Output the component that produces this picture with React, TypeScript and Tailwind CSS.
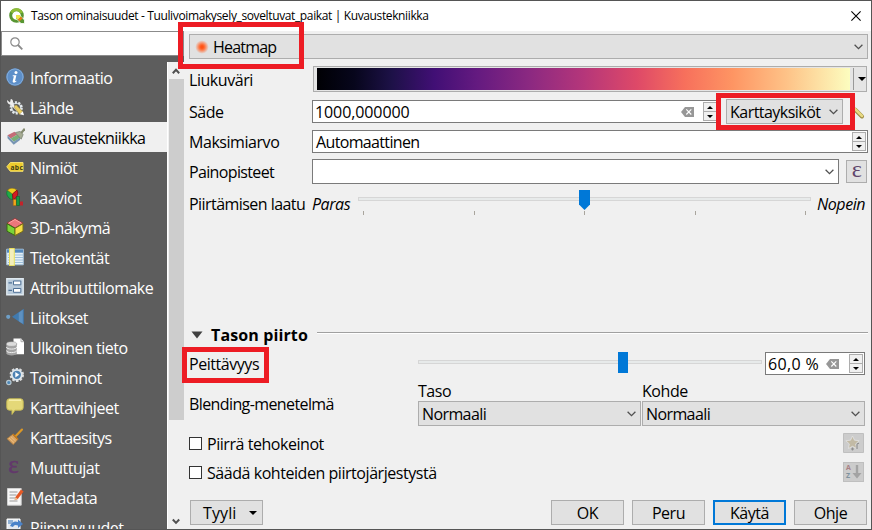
import type { ReactNode } from "react";

function Chevron({ className = "" }: { className?: string }) {
  return (
    <svg className={"shrink-0 " + className} width="9" height="6" viewBox="0 0 9 6">
      <path d="M.6.8 4.5 4.6 8.4.8" fill="none" stroke="#505050" strokeWidth="1.3" />
    </svg>
  );
}

function Label({ children, className = "" }: { children: ReactNode; className?: string }) {
  return <span className={"whitespace-nowrap " + className}>{children}</span>;
}

function Combo({ text, className = "", children }: { text?: string; className?: string; children?: ReactNode }) {
  return (
    <div className={"flex h-[25px] items-center border border-[#adadad] bg-[#e1e1e1] pl-[3px] pr-[4px] " + className}>
      {children}
      <Label>{text}</Label>
      <Chevron className="ml-auto" />
    </div>
  );
}

function Spinner() {
  return (
    <div className="flex h-[19px] w-[14px] shrink-0 flex-col border border-[#adadad] bg-[#f0f0f0]">
      <div className="flex h-[9px] items-center justify-center border-b border-[#adadad]">
        <svg width="6" height="3" viewBox="0 0 6 3"><path d="M0 3 3 0l3 3z" /></svg>
      </div>
      <div className="flex flex-1 items-center justify-center">
        <svg width="6" height="3" viewBox="0 0 6 3"><path d="M0 0 3 3l3-3z" /></svg>
      </div>
    </div>
  );
}

function Clear() {
  return (
    <svg className="shrink-0" width="13" height="10" viewBox="0 0 13 10">
      <path d="M4 0h9v10H4L0 5z" fill="#979797" />
      <path d="m5.3 2.3 5 5.2m0-5.2-5 5.2" stroke="#fff" strokeWidth="1.1" />
    </svg>
  );
}

function Push({ text, primary }: { text: string; primary?: boolean }) {
  return (
    <button
      className={
        "flex h-[25px] w-[73px] items-center justify-center bg-[#e1e1e1] " +
        (primary ? "border-2 border-[#0078d7]" : "border border-[#adadad]")
      }
    >
      {text}
    </button>
  );
}

function Box() {
  return <span className="size-[13px] shrink-0 border border-[#333] bg-white" />;
}

const icons: ReactNode[] = [
  <>
    <circle cx="9" cy="9" r="8.8" fill="#5d8fc9" />
    <circle cx="9" cy="9" r="8" fill="none" stroke="#82abd8" />
    <circle cx="10" cy="4.4" r="1.5" fill="#fff" />
    <path d="M6.8 7.3h3.6L9 13.3l1.4-.5-.2 1C8.7 15 6.3 15 6.7 13.1L7.9 8.3H6.6z" fill="#fff" />
  </>,
  <>
    <circle cx="10.2" cy="9.8" r="5.3" fill="#bfc9cf" stroke="#e3e9ec" strokeWidth="2.6" strokeDasharray="2 1.3" />
    <circle cx="10.2" cy="9.8" r="3.7" fill="#5c5c5c" />
    <path d="m4.5 5.2 7.2 7.2" stroke="#eee" strokeWidth="2.2" />
    <path d="M1 2.1 4 4.4 4.8 1C8 1.5 7.8 6.3 4.6 6.6 2.5 6.7 1 5 1 2.1z" fill="#eee" />
    <path d="m8 9 2-2.3 6.7 6.7-3 3z" fill="#e9cd62" stroke="#9a853d" strokeWidth=".5" />
    <path d="m13.7 16.3 3.1-3 1.2 4z" fill="#fff" />
  </>,
  <>
    <path d="m.5 7.2 7-3.4 3 2.6-6.8 4.2z" fill="#c56c76" />
    <path d="m3.7 10.6 6.8-4.2 3 3.2-6.6 4.2z" fill="#79ae76" />
    <path d="M.5 7.2v3l6.2 6.6L13 12V9.6l-6.3 4.2z" fill="#7795b4" />
    <path d="m8.4 4.6 5.8 6.6 2-4.8L13 3.4z" fill="#a5ab92" stroke="#777f71" strokeWidth=".7" />
    <path d="m14.2 5 3.6-4.2" stroke="#858b70" strokeWidth="2.2" />
  </>,
  <>
    <path d="M.8 8.8 4.3 4.5H17v8.8H4.3z" fill="#edcc2d" stroke="#f4df6c" />
    <text x="4.4" y="11.5" fontSize="6.7" fontWeight="700" fill="#423c13" textLength="12">abc</text>
  </>,
  <>
    <path d="M6.5 6 1.5 2.2Q-1 7 4 10.8l3 1z" fill="#20a849" stroke="#087b2e" strokeWidth=".7" />
    <path d="M6.5 6 1.5 2.2Q5.8-1.8 11 2.1z" fill="#f0cf21" stroke="#9a7a15" strokeWidth=".6" />
    <path d="M6.5 6 11 2.1Q13.8 8 7 11.8z" fill="#d51b21" stroke="#780f12" strokeWidth=".7" />
    <path d="M7.3 11.5h3v6h-3z" fill="#f1a51c" stroke="#ac6808" strokeWidth=".5" />
    <path d="M10.5 8.5h3v9h-3z" fill="#159842" stroke="#075d23" strokeWidth=".5" />
    <path d="M14 13.5h3v4h-3z" fill="#c3232a" />
  </>,
  <>
    <path d="m1 5.2 8-4.7 8 4.7-8 4.9z" fill="#ec777b" stroke="#9d3739" />
    <path d="m1 5.7 8 4.6v7.2l-8-4.3z" fill="#7bd438" stroke="#386914" />
    <path d="m17 5.7-8 4.6v7.2l8-4.3z" fill="#f4dc44" stroke="#7b7018" />
    <path d="m2.5 5.2 6.5-3.7 6.5 3.7" fill="none" stroke="#ffa2a1" />
  </>,
  <>
    <path d="M.7 1.2h16.6v15.6H.7z" fill="#e5f0f7" stroke="#a0bfd9" />
    <path d="M1 1.5h16v3.2H1z" fill="#5489bd" />
    <path d="M2 7h15M2 9.5h15M2 12h15M2 14.5h15" stroke="#9dbfdb" />
    <path d="M3.5.5h4.8v17.2H3.5z" fill="#f3efbc" stroke="#ece05c" />
  </>,
  <>
    <path d="M.8.8h16.4v16H.8z" fill="#b9cbdb" stroke="#dfe9f0" strokeWidth="1.4" />
    <path d="M7.5 3h7.3v3.8H7.5zM7.5 10.5h7.3v3.8H7.5z" fill="#fff" stroke="#4f7196" />
    <path d="M2.5 4.9h3.5M2.5 12.4h3.5" stroke="#4f7196" strokeWidth="1.3" />
  </>,
  <>
    <path d="M17.8.8v16L6 8.8z" fill="#417aae" />
    <path d="M16.8 1.8v14l-4-2.5V4.7z" fill="#5e91c1" />
    <circle cx="2.2" cy="8.8" r="2.1" fill="#6e9fc7" />
  </>,
  <>
    <path d="M7.5.5H15l3 3.2v12.6H7.5z" fill="#fff" />
    <path d="M15 .5v3.2h3" fill="none" stroke="#aaa" />
    <path d="M.4 6v9.3c0 2.8 10.4 2.8 10.4 0V6z" fill="#a4a4a4" />
    <ellipse cx="5.6" cy="6" rx="5.2" ry="2.3" fill="#ddd" stroke="#919191" strokeWidth=".5" />
    <path d="M.4 9c0 2.8 10.4 2.8 10.4 0M.4 12.5c0 2.8 10.4 2.8 10.4 0" fill="none" stroke="#eee" />
  </>,
  <>
    <circle cx="10.8" cy="6.8" r="6" fill="#4d82b3" stroke="#ddd" strokeWidth="2.4" strokeDasharray="2.4 1.37" />
    <circle cx="10.8" cy="6.8" r="5" fill="#4d82b3" stroke="#e2e7ea" strokeWidth="1.7" />
    <path d="m9.3 4 4 2.8-4 2.8z" fill="#fff" />
    <circle cx="2.8" cy="14.5" r="2.2" fill="#4d87b7" stroke="#b6c7d1" strokeWidth="1.2" />
  </>,
  <>
    <path d="M3.5.8h11q2.7 0 2.7 2.7v6q0 2.7-2.7 2.7H9l-3 4.2v-4.2H3.5Q.8 12.2.8 9.5v-6Q.8.8 3.5.8z" fill="#e4d878" stroke="#c5b955" />
    <path d="M3 2.2h12" stroke="#f7f0ac" strokeWidth="1.5" />
  </>,
  <>
    <path d="m10 7.8 6-6.2" stroke="#db9726" strokeWidth="2.2" strokeLinecap="round" />
    <path d="m6.5 6.5 5.2 5.2-4.4 5L.9 10.7z" fill="#d8a362" stroke="#a87739" strokeWidth=".6" />
    <path d="m3 10 5 4.7m-3.2-6 5 4.6" stroke="#f2c384" strokeWidth=".8" />
    <path d="m6.7 6 5.4 5.4" stroke="#c97a1a" strokeWidth="1.4" />
  </>,
  <text x="2.3" y="14.5" fontSize="25" fontFamily="Liberation Serif, serif" fill="#62386b" stroke="#62386b" strokeWidth=".5">ε</text>,
  <>
    <path d="M1.5.5h13.7v16.7H1.5z" fill="#f7f7f7" stroke="#d0d0d0" />
    <path d="M3.5 4h8M3.5 7h7M3.5 10h6M3.5 13h8" stroke="#999" />
    <path d="m9.3 9.2 5.7-7.7 2.6 1.9-5.8 7.6-3.1 1.3z" fill="#e45a27" />
    <path d="m9.3 9.2-.8 3.1 3.3-1.3z" fill="#eac697" />
  </>,
  <>
    <path d="M1 1h13v16H1z" fill="#e5eaf0" stroke="#fff" />
    <path d="M2 2h5v4H2z" fill="#8fb0d4" />
    <path d="M4 8q3-6 8-4V1.5L17 6l-5 4V7.5Q8 6 7 9z" fill="#4a83c9" />
    <path d="M1 11h6v6H1z" fill="#8aabd2" />
    <path d="M12 11h4v6h-4z" fill="#5d91cf" />
  </>,
];

const names = [
  "Informaatio", "Lähde", "Kuvaustekniikka", "Nimiöt", "Kaaviot", "3D-näkymä", "Tietokentät", "Attribuuttilomake",
  "Liitokset", "Ulkoinen tieto", "Toiminnot", "Karttavihjeet", "Karttaesitys", "Muuttujat", "Metadata", "Riippuvuudet",
];

function Sidebar() {
  return (
    <aside className="flex w-[183px] shrink-0 flex-col">
      <div className="flex h-[25px] items-center border border-[#8b8b8b] bg-white pl-[8px]">
        <svg width="13" height="13" viewBox="0 0 13 13" fill="none" stroke="#8a8a8a">
          <circle cx="5" cy="5" r="4.2" strokeWidth="1.2" />
          <path d="m8 8 4.3 4.3" strokeWidth="1.8" />
        </svg>
      </div>
      <div className="h-[6px] bg-[#5d5d5d]" />
      <div className="flex min-h-0 flex-1">
        <nav className="w-[166px] overflow-hidden bg-[#5d5d5d]">
          {names.map((name, i) => (
            <div
              key={name}
              className={
                "flex h-[30px] items-center pl-[5px] tracking-[-0.5px] " +
                (i === 2 ? "gap-[8px] bg-[#f0f0f0] text-black" : "gap-[6px] text-white")
              }
            >
              <svg className={"shrink-0 " + (i === 2 ? "ml-[1px]" : "")} width="18" height="18" viewBox="0 0 18 18">
                {icons[i]}
              </svg>
              <Label className={i === 2 ? "pt-[2px] tracking-[-0.55px]" : "pt-[2px]"}>{name}</Label>
            </div>
          ))}
        </nav>
        <div className="flex w-[17px] flex-col items-center border-l border-white bg-[#f0f0f0]">
          <svg className="mt-[6px]" width="8" height="7" viewBox="0 0 8 7">
            <path d="m.8 5.2 3.2-3.4 3.2 3.4" fill="none" stroke="#505050" strokeWidth="2" />
          </svg>
          <div className="mt-[4px] h-[341px] w-[15px] bg-[#cdcdcd]" />
          <svg className="mb-[4px] mt-auto" width="8" height="7" viewBox="0 0 8 7">
            <path d="m.8 1.5 3.2 3.4 3.2-3.4" fill="none" stroke="#505050" strokeWidth="2" />
          </svg>
        </div>
      </div>
    </aside>
  );
}

function Wand() {
  return (
    <svg className="ml-[5px] shrink-0" width="18" height="16" viewBox="0 0 18 16">
      <path d="M3.5 2.5 7 6" stroke="#bbb" strokeWidth="3" />
      <path d="m7 5.5 7 7" stroke="#9c8b43" strokeWidth="4" strokeLinecap="round" />
      <path d="m7 5 7 7" stroke="#e7d982" strokeWidth="2.5" strokeLinecap="round" />
    </svg>
  );
}

function Form() {
  return (
    <main className="flex min-w-0 flex-1 flex-col pl-[5px] pt-[3px]">
      <div className="relative w-[679px] tracking-[-0.8px]">
        <Combo text="Heatmap" className="pr-[4px]">
          <span className="mr-[4px] ml-[2px] size-[14px] bg-[radial-gradient(circle,#ff5316_12%,#ff733f_28%,#e1e1e1_68%)]" />
        </Combo>
        <div className="absolute -left-[11px] -top-[12px] h-[47px] w-[126px] border-[5px] border-[#ed1c24]" />
      </div>

      <div className="mt-[7px] flex h-[26px] items-center">
        <Label className="w-[124px] pt-[2px]">Liukuväri</Label>
        <div className="flex h-[26px] w-[554px] border border-[#adadad] bg-[#e5e5e5] pl-[3px]">
          <div className="my-[1px] w-[534px] bg-[linear-gradient(90deg,#000004_0%,#07061c_7%,#1d1147_14%,#410f75_22%,#641a80_30%,#8c2981_40%,#b5367a_50%,#de4968_60%,#f7705c_69%,#fe9563_78%,#fec287_88%,#fcfdbf_100%)]" />
          <div className="my-px ml-[3px] flex w-[13px] items-center justify-end border-l border-[#999]">
            <svg width="8" height="4" viewBox="0 0 8 4"><path d="M0 0h8L4 4z" /></svg>
          </div>
        </div>
      </div>

      <div className="mt-[7px] flex h-[25px] items-center">
        <Label className="w-[123px]">Säde</Label>
        <div className="flex h-[23px] w-[408px] items-center border border-[#7a7a7a] bg-white pl-[2px] pr-[2px]">
          <Label className="grow tracking-[-0.1px]">1000,000000</Label>
          <Clear />
          <span className="w-[9px]" />
          <Spinner />
        </div>
        <div className="relative ml-[6px] w-[117px]">
          <Combo text="Karttayksiköt" className="tracking-[-0.53px]" />
          <div className="absolute -left-[10px] -top-[6px] h-[37px] w-[139px] border-[5px] border-[#ed1c24]" />
        </div>
        <Wand />
      </div>

      <div className="mt-[6px] flex h-[23px] items-center">
        <Label className="w-[123px]">Maksimiarvo</Label>
        <div className="flex h-[23px] w-[556px] items-center justify-between border border-[#7a7a7a] bg-white pl-[3px] pr-px">
          <Label className="tracking-[-0.65px]">Automaattinen</Label>
          <Spinner />
        </div>
      </div>

      <div className="mt-[6px] flex h-[25px] items-center">
        <Label className="w-[123px] pt-px tracking-[-0.65px]">Painopisteet</Label>
        <div className="flex h-[25px] w-[527px] items-center border border-[#7a7a7a] bg-white pr-[4px]">
          <Chevron className="ml-auto" />
        </div>
        <div className="ml-[7px] flex h-[23px] w-[21px] items-center justify-center border border-[#adadad] bg-[#e1e1e1] pb-[5px] font-['Liberation_Serif',serif] text-[24px] leading-none text-[#62466c]">
          ε
        </div>
      </div>

      <div className="mt-[6px] flex h-[28px] items-center">
        <Label className="w-[123px] tracking-[-0.55px]">Piirtämisen laatu</Label>
        <Label className="w-[46px] italic">Paras</Label>
        <div className="relative h-[28px] w-[453px] pt-[7px]">
          <div className="h-[4px] border border-[#d6d6d6] bg-[#e7eaea]" />
          <div className="mx-[5px] mt-[10px] flex justify-between">
            {[0, 1, 2, 3, 4].map((n) => <span key={n} className="h-[4px] w-px bg-[#a9a59d]" />)}
          </div>
          <svg className="absolute left-[221px] top-0" width="11" height="20" viewBox="0 0 11 20">
            <path d="M0 0h11v14.5L5.5 20 0 14.5z" fill="#0078d7" />
          </svg>
        </div>
        <Label className="ml-[6px] italic">Nopein</Label>
      </div>

      <div className="mt-[106px] flex h-[22px] items-center">
        <svg className="ml-[2px] mr-[8px] shrink-0" width="12" height="8" viewBox="0 0 12 8">
          <path d="M.5.5h11L6 7.5z" fill="#404040" />
        </svg>
        <Label className="w-[98px] font-bold tracking-[0.12px]">Tason piirto</Label>
        <div className="ml-[8px] mr-[3px] mb-[4px] h-[2px] flex-1 border-t border-[#a0a0a0] bg-white" />
      </div>

      <div className="mt-[6px] flex h-[23px] items-center">
        <div className="relative w-[229px]">
          <Label>Peittävyys</Label>
          <div className="absolute -left-[7px] -top-[7px] h-[36px] w-[87px] border-[5px] border-[#ed1c24]" />
        </div>
        <div className="relative h-[23px] w-[344px] pt-[8px]">
          <div className="h-[4px] border border-[#d6d6d6] bg-[#e7eaea]" />
          <div className="absolute left-[200px] top-0 h-[21px] w-[10px] bg-[#0078d7]" />
        </div>
        <div className="ml-[3px] flex h-[23px] w-[100px] items-center border border-[#7a7a7a] bg-white pl-[2px] pr-px">
          <Label className="grow tracking-[0.35px]">60,0 %</Label>
          <Clear />
          <span className="w-[10px]" />
          <Spinner />
        </div>
      </div>

      <div className="mt-[6px] flex h-[45px]">
        <Label className="w-[229px] pt-[13px] tracking-[-0.6px]">Blending-menetelmä</Label>
        <div className="w-[223px]">
          <div className="flex h-[20px] items-center"><Label>Taso</Label></div>
          <Combo text="Normaali" className="tracking-[-0.6px]" />
        </div>
        <div className="ml-px w-[223px]">
          <div className="flex h-[20px] items-center"><Label>Kohde</Label></div>
          <Combo text="Normaali" className="tracking-[-0.6px]" />
        </div>
      </div>

      <div className="mt-[7px] flex h-[20px] items-center gap-[5px] pr-[7px]">
        <Box />
        <Label className="grow pt-px">Piirrä tehokeinot</Label>
        <svg width="21" height="20" viewBox="0 0 21 20">
          <path d="M.5.5h20v19H.5z" fill="#ccc" stroke="#bfbfbf" />
          <path d="m9.5 3 2 4.2 4.7.5-3.5 3.2.9 4.6-4.1-2.2-4.1 2.2.9-4.6-3.5-3.2 4.7-.5z" fill="#c2baa5" stroke="#e3e3e3" strokeWidth=".8" />
          <path d="M14 16v-4q0-2 2-1.5M8 16h3m-1.5-1.5v3" fill="none" stroke="#8f8f8f" strokeWidth="1.2" />
        </svg>
      </div>
      <div className="mt-[9px] flex h-[20px] items-center gap-[5px] pr-[7px]">
        <Box />
        <Label className="grow pt-px">Säädä kohteiden piirtojärjestystä</Label>
        <div className="flex h-[20px] w-[21px] items-center border border-[#bfbfbf] bg-[#ccc] pl-[2px]">
          <div className="flex w-[6px] flex-col text-[7px] font-bold leading-[8px] tracking-normal">
            <span className="h-[8px] text-[#a97f85]">A</span>
            <span className="h-[8px] text-[#7f929e]">Z</span>
          </div>
          <svg width="10" height="14" viewBox="0 0 10 14">
            <path d="M5 0v10" stroke="#a3a3a3" strokeWidth="2.4" />
            <path d="M.5 8h9L5 13.5z" fill="#a3a3a3" />
          </svg>
        </div>
      </div>

      <div className="mt-[18px] flex h-[25px] gap-[8px] pl-px pr-[4px]">
        <button className="mr-auto flex w-[73px] items-center border border-[#adadad] bg-[#e1e1e1] pl-[12px]">
          <span className="tracking-[0.1px]">Tyyli</span>
          <svg className="ml-auto mr-[5px]" width="8" height="4" viewBox="0 0 8 4"><path d="M0 0h8L4 4z" /></svg>
        </button>
        <Push text="OK" />
        <Push text="Peru" />
        <Push text="Käytä" primary />
        <Push text="Ohje" />
      </div>
    </main>
  );
}

export default function App() {
  return (
    <div className="flex h-[530px] w-[872px] flex-col overflow-hidden border border-[#555] bg-[#f0f0f0] font-['Open_Sans','Noto_Sans',sans-serif] text-[16px] leading-[20px] tracking-[-0.45px] text-black">
      <header className="flex h-[30px] shrink-0 items-center bg-white pl-[8px] pr-[10px]">
        <svg width="16" height="16" viewBox="0 0 16 16">
          <circle cx="7.5" cy="7.5" r="5.8" fill="none" stroke="#589632" strokeWidth="3" />
          <path d="M2.5 4.5a5.8 5.8 0 0 1 10.2.5" fill="none" stroke="#8fbd38" strokeWidth="2.8" />
          <path d="M7 7h3.5l5 5v3.5H12l-5-5z" fill="#589632" stroke="#fff" strokeWidth=".8" />
          <path d="M7 7h3.3l1.7 1.7-3 3-2-1.7z" fill="#f0e64a" />
          <path d="m9 11.7 3-3 1.6 1.6-3 3z" fill="#ee7913" />
        </svg>
        <span className="ml-[6px] grow whitespace-nowrap text-[12px] tracking-[-0.37px]">
          Tason ominaisuudet - Tuulivoimakysely_soveltuvat_paikat | Kuvaustekniikka
        </span>
        <svg width="10" height="10" viewBox="0 0 10 10"><path d="m.4.4 9.2 9.2m0-9.2L.4 9.6" stroke="#000" strokeWidth="1.1" /></svg>
      </header>
      <div className="flex min-h-0 flex-1">
        <Sidebar />
        <Form />
      </div>
    </div>
  );
}
